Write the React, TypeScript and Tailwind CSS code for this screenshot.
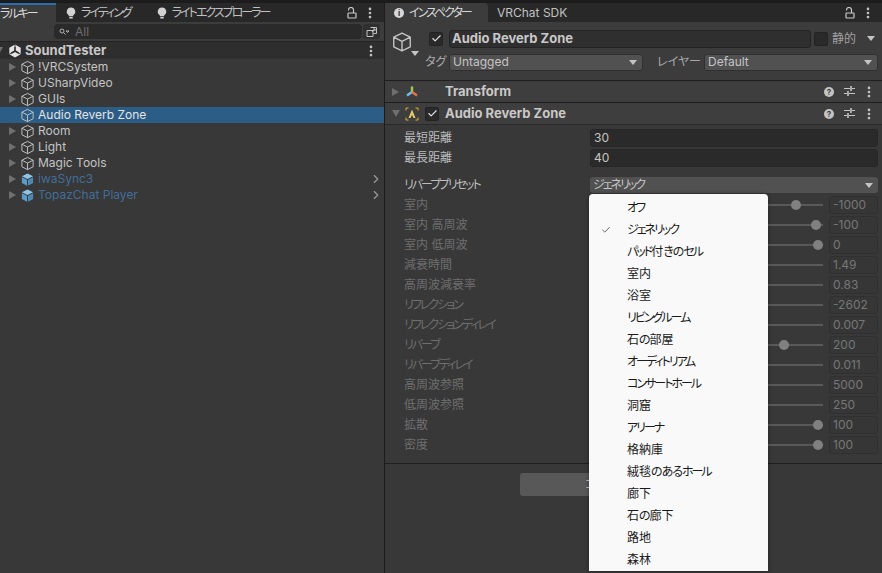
import React from 'react';
import { Check, ChevronRight, EllipsisVertical } from 'lucide-react';

// palt closes up the kana so they take the proportional widths seen in the picture
const FONT = '[font-family:Inter,"Noto_Sans_CJK_JP",sans-serif] [font-feature-settings:"palt"]';

// Kana in the picture is narrower than any installed font, so tighten those runs only
const Jp = ({ text }: { text: string }) => (
  <>
    {text.split(/([ァ-ヶー]+|[ぁ-ん]+)/).map((run, i) => {
      if (/^[ァ-ヶー]+$/.test(run)) {
        return (
          <span key={i} className="tracking-[-2px]">
            {run}
          </span>
        );
      }
      if (/^[ぁ-ん]+$/.test(run)) {
        return (
          <span key={i} className="tracking-[-1px]">
            {run}
          </span>
        );
      }
      return run;
    })}
  </>
);

const Cube = ({ size = 16, blue = false }: { size?: number; blue?: boolean }) => (
  <svg width={size} height={size} viewBox="0 0 16 16" className="shrink-0">
    {blue ? (
      <>
        <path d="M8 1.5 14 4.5 8 7.5 2 4.5Z" fill="#8fc4e6" />
        <path d="M2 5.5 7.5 8.3V14.6L2 11.6Z" fill="#5a9bc7" />
        <path d="M14 5.5 8.5 8.3V14.6L14 11.6Z" fill="#4a8ab5" />
      </>
    ) : (
      <path
        d="M8 1.5 14 4.5V11.5L8 14.5 2 11.5V4.5ZM2 4.5 8 7.5 14 4.5M8 7.5V14.5"
        fill="none"
        stroke="#c4c4c4"
        strokeWidth="1"
        strokeLinejoin="round"
      />
    )}
  </svg>
);

const UnityLogo = () => (
  <svg width="14" height="14" viewBox="0 0 16 16" className="shrink-0">
    <path d="M8 0.5 14.5 4.2V11.8L8 15.5 1.5 11.8V4.2Z" fill="#e4e4e4" />
    <path d="M8 3V8M8 8 3.6 10.6M8 8 12.4 10.6" stroke="#282828" strokeWidth="1.8" fill="none" />
    <path d="M8 0.5V3M1.5 11.8 3.6 10.6M14.5 11.8 12.4 10.6" stroke="#282828" strokeWidth="1" fill="none" />
  </svg>
);

const Bulb = () => (
  <svg width="10" height="12" viewBox="0 0 10 12" className="shrink-0">
    <path d="M5 0.5A4.2 4.2 0 0 1 7.2 8.3V9.2H2.8V8.3A4.2 4.2 0 0 1 5 0.5Z" fill="#d2d2d2" />
    <rect x="3.2" y="10" width="3.6" height="1.5" rx="0.5" fill="#d2d2d2" />
  </svg>
);

const Lock = () => (
  <svg width="10" height="12" viewBox="0 0 10 12" fill="none" stroke="#c8c8c8" strokeWidth="1.2" className="shrink-0">
    <path d="M1.5 3.5V3A2.5 2.5 0 0 1 6.5 3V6" />
    <rect x="1" y="6" width="8" height="5" rx="0.5" />
  </svg>
);

const Help = () => (
  <span className="flex h-[10px] w-[10px] shrink-0 items-center justify-center rounded-full bg-[#c4c4c4] text-[8px] font-bold text-[#3c3c3c]">
    ?
  </span>
);

const Tune = () => (
  <svg width="11" height="11" viewBox="0 0 11 11" stroke="#c4c4c4" strokeWidth="1" fill="none" className="shrink-0">
    <path d="M0 2.5H6M8 2.5H11M0 7.5H3M5 7.5H11" />
    <path d="M7 0V5M4 5V10" strokeWidth="1.6" />
  </svg>
);

const Caret = () => (
  <span className="block h-0 w-0 shrink-0 border-x-[4px] border-t-[5px] border-x-transparent border-t-[#c4c4c4]" />
);

const Arrow = ({ open = false }: { open?: boolean }) =>
  open ? (
    <span className="block h-0 w-0 shrink-0 border-x-[4px] border-t-[7px] border-x-transparent border-t-[#6f6f6f]" />
  ) : (
    <span className="block h-0 w-0 shrink-0 border-y-[4px] border-l-[7px] border-y-transparent border-l-[#6f6f6f]" />
  );

const CheckBox = ({ on = true }: { on?: boolean }) => (
  <span className="flex h-[14px] w-[14px] shrink-0 items-center justify-center rounded-[2px] border border-[#232323] bg-[#2a2a2a]">
    {on && <Check size={11} strokeWidth={2.5} color="#e0e0e0" />}
  </span>
);

const Dots = ({ className = '' }: { className?: string }) => (
  <EllipsisVertical size={14} strokeWidth={2.6} color="#c4c4c4" className={`shrink-0 ${className}`} />
);

const hierarchy = [
  { name: '!VRCSystem' },
  { name: 'USharpVideo' },
  { name: 'GUIs' },
  { name: 'Audio Reverb Zone', selected: true },
  { name: 'Room' },
  { name: 'Light' },
  { name: 'Magic Tools' },
  { name: 'iwaSync3', prefab: true },
  { name: 'TopazChat Player', prefab: true },
];

const sliders = [
  { label: '室内', value: '-1000', thumb: 796 },
  { label: '室内 高周波', value: '-100', thumb: 816 },
  { label: '室内 低周波', value: '0', thumb: 818 },
  { label: '減衰時間', value: '1.49' },
  { label: '高周波減衰率', value: '0.83' },
  { label: 'リフレクション', value: '-2602' },
  { label: 'リフレクションディレイ', value: '0.007' },
  { label: 'リバーブ', value: '200', thumb: 784 },
  { label: 'リバーブディレイ', value: '0.011' },
  { label: '高周波参照', value: '5000' },
  { label: '低周波参照', value: '250' },
  { label: '拡散', value: '100', thumb: 818 },
  { label: '密度', value: '100', thumb: 818 },
];

const presets = [
  'オフ',
  'ジェネリック',
  'パッド付きのセル',
  '室内',
  '浴室',
  'リビングルーム',
  '石の部屋',
  'オーディトリアム',
  'コンサートホール',
  '洞窟',
  'アリーナ',
  '格納庫',
  '絨毯のあるホール',
  '廊下',
  '石の廊下',
  '路地',
  '森林',
];

const ComponentHeader = ({ title, open, icon }: { title: string; open?: boolean; icon: React.ReactNode }) => (
  <div className="flex h-[22px] items-center border-t border-[#1f1f1f] bg-[#3e3e3e] pl-[7px] pr-[6px]">
    <span className="flex w-[12px] justify-start">
      <Arrow open={open} />
    </span>
    <span className="flex w-[16px] justify-center">{icon}</span>
    <span className="ml-[5px] flex w-[14px] justify-center">{open && <CheckBox />}</span>
    <span className="ml-[6px] text-[13px] font-bold text-[#c8c8c8]">{title}</span>
    <span className="ml-auto">
      <Help />
    </span>
    <span className="ml-[10px]">
      <Tune />
    </span>
    <Dots className="ml-[7px]" />
  </div>
);

const SliderRow = ({ label, value, thumb }: { label: string; value: string; thumb?: number }) => (
  <div className="flex h-[20px] items-center pl-[19px] pr-[4px]">
    <span className="w-[186px] shrink-0 text-[12px] text-[#6e6e6e]">
      <Jp text={label} />
    </span>
    <div className="relative h-[2px] w-[233px] shrink-0 bg-[#595959]">
      {thumb !== undefined && (
        <span
          className="absolute top-[-4px] h-[10px] w-[10px] rounded-full bg-[#808080]"
          style={{ left: thumb - 595 }}
        />
      )}
    </div>
    <span className="ml-[6px] flex h-[18px] flex-1 items-center rounded-[3px] border border-[#303030] bg-[#363636] pl-[3px] text-[12px] text-[#767676]">
      {value}
    </span>
  </div>
);

export default function App() {
  return (
    <div className={`relative flex h-[573px] w-[882px] overflow-hidden bg-[#1c1c1c] pt-[3px] ${FONT}`}>
      {/* hierarchy */}
      <div className="flex w-[384px] shrink-0 flex-col">
        <div className="flex h-[19px] shrink-0 items-center bg-[#282828] text-[12px] text-[#c0c0c0]">
          <span className="flex h-full w-[56px] items-center border-t-2 border-[#2c6fb0] bg-[#3c3c3c] text-[#d8d8d8]">
            <Jp text="ラルキー" />
          </span>
          <span className="ml-[10px] flex items-center gap-[5px]">
            <Bulb />
            <span>
              <Jp text="ライティング" />
            </span>
          </span>
          <span className="ml-[26px] flex items-center gap-[5px]">
            <Bulb />
            <span>
              <Jp text="ライトエクスプローラー" />
            </span>
          </span>
          <span className="ml-auto">
            <Lock />
          </span>
          <Dots className="ml-[6px] mr-[7px]" />
        </div>
        <div className="flex h-[19px] shrink-0 items-center gap-[1px] bg-[#3c3c3c] pl-[54px] pr-[4px]">
          <div className="flex h-[15px] flex-1 items-center rounded-[4px] bg-[#2a2a2a] pl-[5px] text-[12px] text-[#6e6e6e]">
            <svg width="10" height="8" viewBox="0 0 10 8" fill="none" stroke="#b0b0b0" className="shrink-0">
              <circle cx="3" cy="3" r="2" />
              <path d="M4.5 4.5 6.5 6.5M7 3H10L8.5 4.5Z" />
            </svg>
            <span className="ml-[6px]">All</span>
          </div>
          <span className="flex h-[15px] w-[17px] items-center justify-center rounded-[3px] bg-[#2f2f2f]">
            <svg width="12" height="12" viewBox="0 0 12 12" fill="none" stroke="#c4c4c4">
              <path d="M4.5 1.5H10.5V7.5H7.5M1 4.5H7V10.5H1ZM6 6 9 3M7 3H9V5" />
            </svg>
          </span>
        </div>
        <div className="flex h-[18px] shrink-0 items-center border-t border-[#242424] bg-[#2e2e2e] pr-[6px]">
          <span className="-ml-[5px] mr-[5px] flex">
            <Arrow open />
          </span>
          <UnityLogo />
          <span className="ml-[3px] text-[13px] font-bold text-[#c8c8c8]">SoundTester</span>
          <Dots className="ml-auto" />
        </div>
        <div className="flex-1 bg-[#383838]">
          {hierarchy.map((item) => (
            <div
              key={item.name}
              className={`flex h-[16px] items-center pl-[9px] text-[12px] ${
                item.selected ? 'bg-[#2c5d87] text-[#e4e4e4]' : item.prefab ? 'text-[#426d9a]' : 'text-[#c4c4c4]'
              }`}
            >
              <span className="flex w-[11px]">{!item.selected && <Arrow />}</span>
              <Cube size={15} blue={item.prefab} />
              <span className="ml-[3px]">{item.name}</span>
              {item.prefab && <ChevronRight size={14} color="#9a9a9a" className="ml-auto mr-[1px]" />}
            </div>
          ))}
        </div>
      </div>

      {/* inspector */}
      <div className="ml-[1px] flex flex-1 flex-col bg-[#383838]">
        <div className="flex h-[19px] shrink-0 items-center bg-[#282828] text-[12px] text-[#c0c0c0]">
          <span className="flex h-full w-[103px] items-center gap-[5px] rounded-tr-[4px] bg-[#3c3c3c] pl-[9px] text-[#d8d8d8]">
            <span className="flex h-[10px] w-[10px] items-center justify-center rounded-full bg-[#d8d8d8] text-[8px] font-bold text-[#282828]">
              i
            </span>
            <span>
              <Jp text="インスペクター" />
            </span>
          </span>
          <span className="ml-[9px]">VRChat SDK</span>
          <span className="ml-auto">
            <Lock />
          </span>
          <Dots className="ml-[6px] mr-[7px]" />
        </div>

        <div className="flex h-[58px] shrink-0 bg-[#3c3c3c] pt-[7px]">
          <div className="relative ml-[6px] w-[38px] shrink-0 pt-[2px]">
            <Cube size={22} />
            <span className="absolute left-[20px] top-[22px]">
              <Caret />
            </span>
          </div>
          <div className="flex flex-1 flex-col gap-[5px] pr-[4px]">
            <div className="flex h-[19px] items-center">
              <CheckBox />
              <span className="ml-[6px] flex h-[18px] w-[362px] items-center rounded-[3px] border border-[#232323] bg-[#2f2f2f] pl-[2px] text-[13px] font-bold text-[#c8c8c8]">
                Audio Reverb Zone
              </span>
              <span className="ml-[3px]">
                <CheckBox on={false} />
              </span>
              <span className="ml-[4px] text-[12px] text-[#a0a0a0]">静的</span>
              <span className="ml-auto mr-[3px]">
                <Caret />
              </span>
            </div>
            <div className="flex h-[18px] items-center text-[12px] text-[#a8a8a8]">
              <span className="-ml-[4px] w-[24px]">タグ</span>
              <span className="flex h-[17px] w-[194px] items-center justify-between rounded-[3px] border border-[#303030] bg-[#515151] pl-[3px] pr-[5px] text-[#c4c4c4]">
                Untagged
                <Caret />
              </span>
              <span className="ml-[14px] w-[46px]">レイヤー</span>
              <span className="ml-[1px] flex h-[17px] flex-1 items-center justify-between rounded-[3px] border border-[#303030] bg-[#515151] pl-[3px] pr-[5px] text-[#c4c4c4]">
                Default
                <Caret />
              </span>
            </div>
          </div>
        </div>

        <ComponentHeader
          title="Transform"
          icon={
            <svg width="14" height="14" viewBox="0 0 14 14">
              <path d="M7 1.5V7" stroke="#9ccc4a" strokeWidth="2.4" />
              <path d="M7 7 2 10.5" stroke="#6fc3e8" strokeWidth="2.4" />
              <path d="M7 7 12 10.5" stroke="#e8734a" strokeWidth="2.4" />
            </svg>
          }
        />
        <ComponentHeader
          title="Audio Reverb Zone"
          open
          icon={
            <svg width="14" height="14" viewBox="0 0 14 14" fill="none">
              <path d="M7 2.5 10.5 11H8.5L7 8 5.5 11H3.5Z" fill="#e6c96a" />
              <path d="M1 3.5V1H3.5M10.5 1H13V3.5M1 10.5V13H3.5M13 10.5V13H10.5" stroke="#e6a92c" />
            </svg>
          }
        />

        <div className="flex h-[339px] shrink-0 flex-col border-t border-[#2a2a2a] pt-[3px] text-[12px] text-[#bcbcbc]">
          <div className="flex h-[20px] items-center pl-[19px] pr-[4px]">
            <span className="w-[186px]">最短距離</span>
            <span className="flex h-[18px] flex-1 items-center rounded-[3px] border border-[#262626] bg-[#2a2a2a] pl-[3px] text-[#c4c4c4]">
              30
            </span>
          </div>
          <div className="flex h-[20px] items-center pl-[19px] pr-[4px]">
            <span className="w-[186px]">最長距離</span>
            <span className="flex h-[18px] flex-1 items-center rounded-[3px] border border-[#262626] bg-[#2a2a2a] pl-[3px] text-[#c4c4c4]">
              40
            </span>
          </div>
          <div className="mt-[7px] flex h-[20px] items-center pl-[19px] pr-[4px]">
            <span className="w-[186px]">
              <Jp text="リバーブプリセット" />
            </span>
            <span className="flex h-[16px] flex-1 items-center justify-between rounded-[3px] bg-[#515151] pl-[3px] pr-[5px] text-[#c4c4c4]">
              <span>
                <Jp text="ジェネリック" />
              </span>
              <Caret />
            </span>
          </div>
          {sliders.map((row) => (
            <SliderRow key={row.label} label={row.label} value={row.value} thumb={row.thumb} />
          ))}
        </div>

        <div className="flex flex-1 justify-center border-t border-[#1f1f1f] pt-[9px]">
          <span className="flex h-[23px] w-[228px] items-center justify-center rounded-[3px] bg-[#585858] text-[12px] text-[#c4c4c4]">
            <span>
              <Jp text="コンポーネントを追加" />
            </span>
          </span>
        </div>
      </div>

      {/* preset popup */}
      <div className="absolute left-[589px] top-[194px] w-[179px] rounded-t-[4px] bg-[#f9f9f9] pt-[3px] shadow-[0_0_4px_rgba(0,0,0,0.4)]">
        {presets.map((name) => (
          <div key={name} className="relative flex h-[22px] items-center pl-[38px] text-[12px] text-[#1a1a1a]">
            {name === 'ジェネリック' && (
              <Check size={10} strokeWidth={1.6} color="#1a1a1a" className="absolute left-[12px]" />
            )}
            <span>
              <Jp text={name} />
            </span>
          </div>
        ))}
      </div>
    </div>
  );
}
